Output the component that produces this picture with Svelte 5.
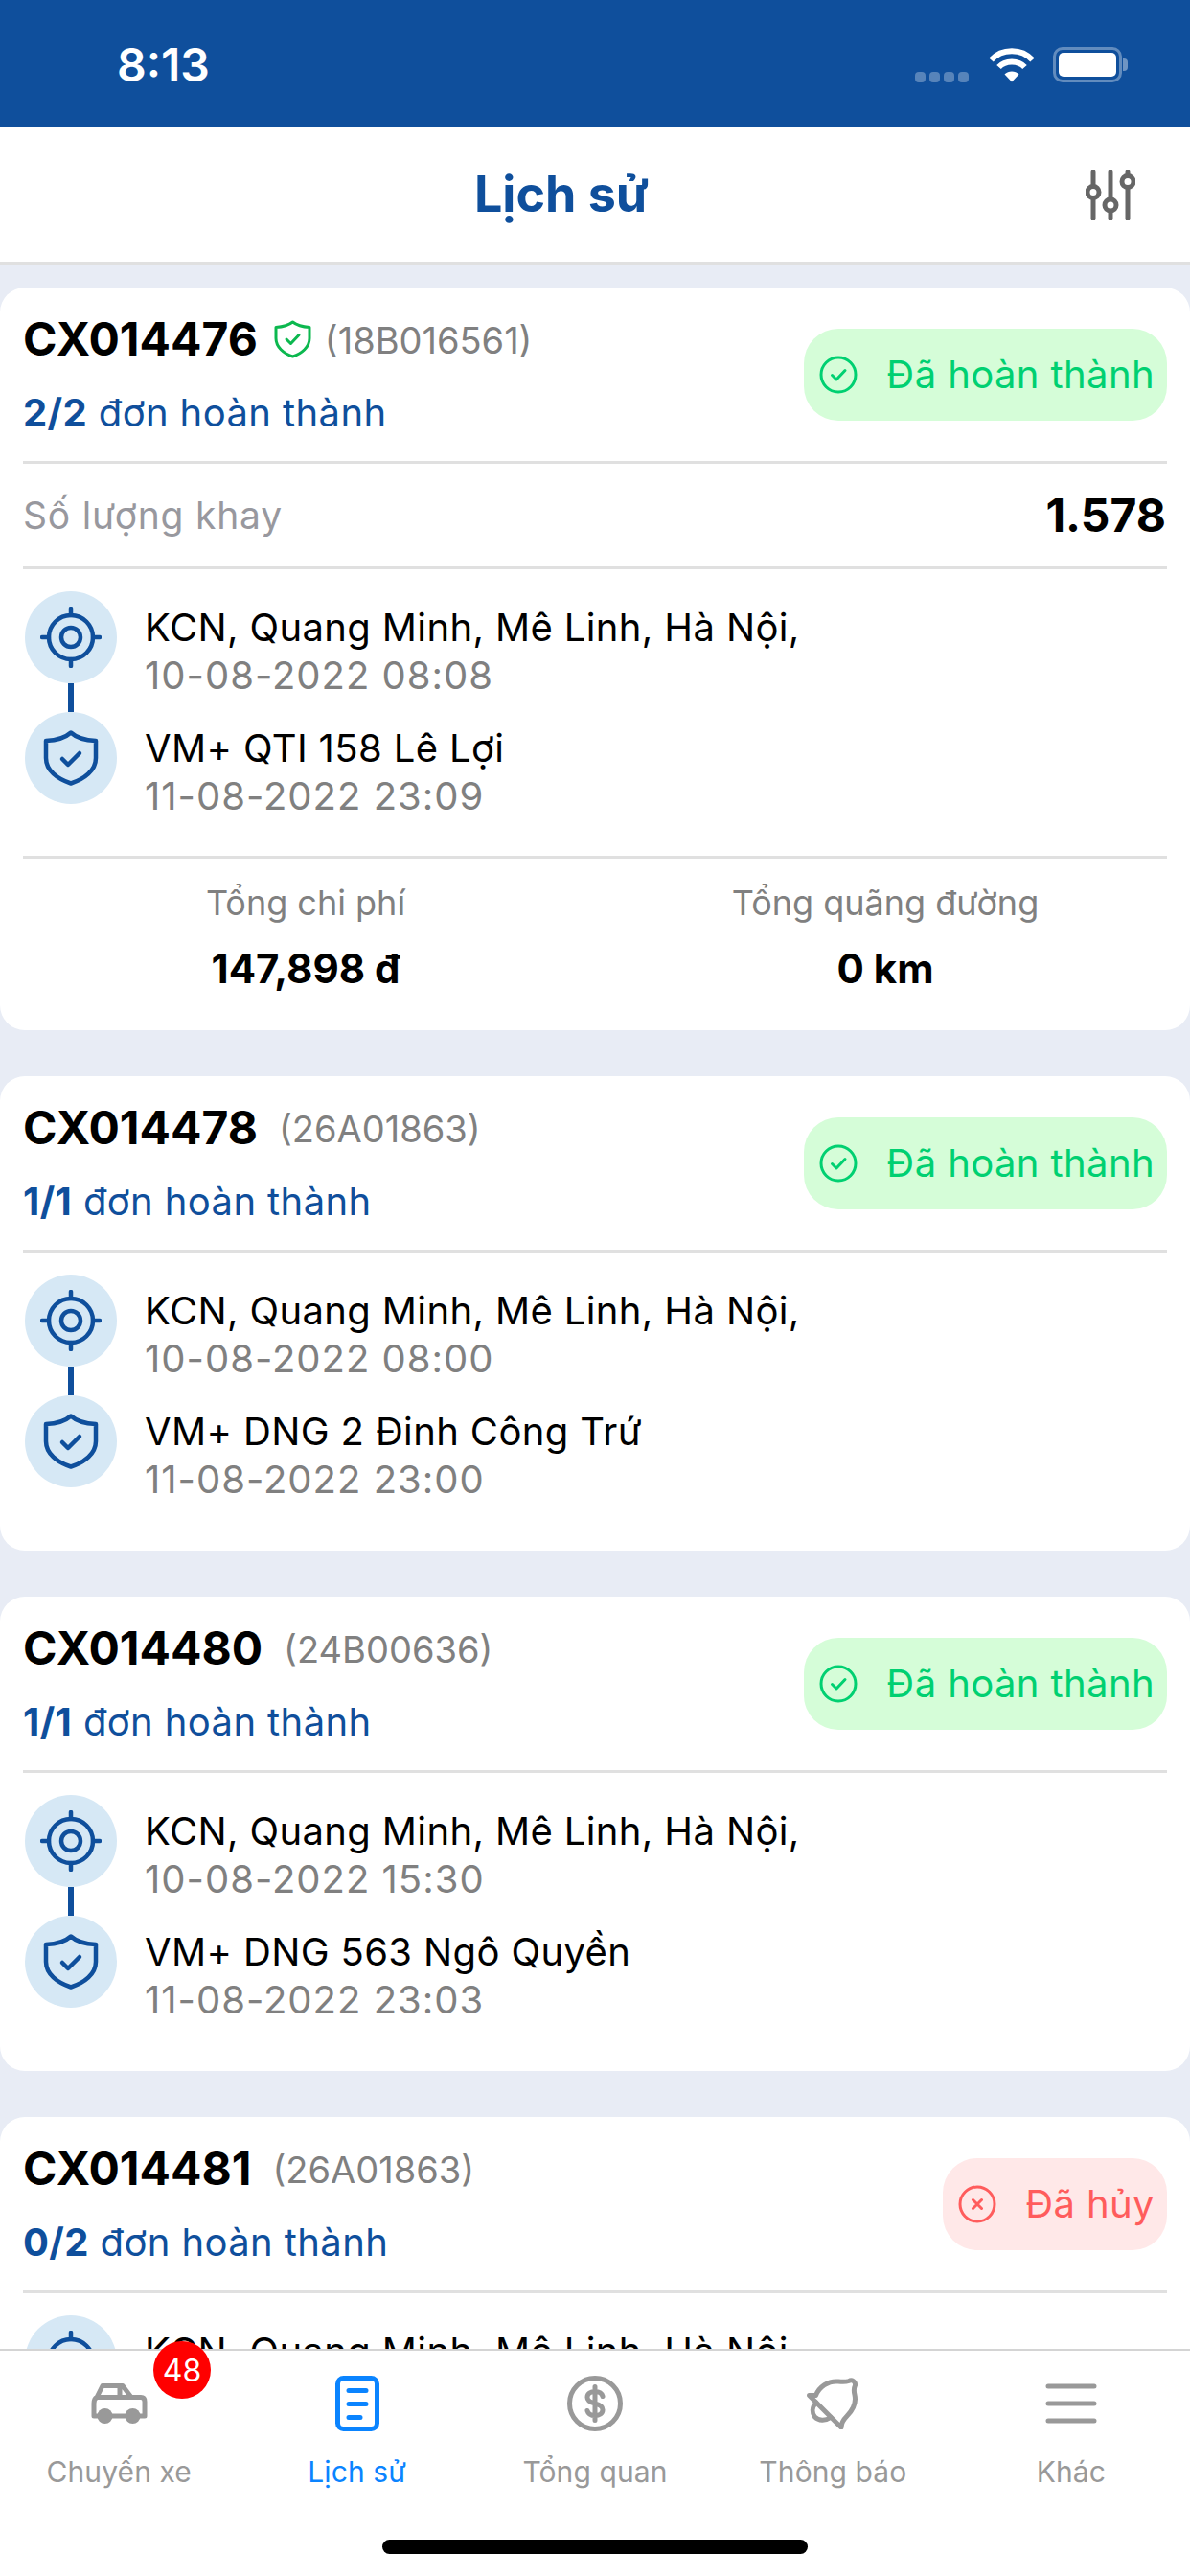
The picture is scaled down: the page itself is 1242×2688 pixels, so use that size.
<script>
  const trips = [
    { id: 'CX014476', verified: true, plate: '(18B016561)', done: '2/2', status: 'ok', qty: '1.578', from: 'KCN, Quang Minh, Mê Linh, Hà Nội,', t1: '10-08-2022 08:08', to: 'VM+ QTI 158 Lê Lợi', t2: '11-08-2022 23:09', cost: '147,898 đ', dist: '0 km' },
    { id: 'CX014478', plate: '(26A01863)', done: '1/1', status: 'ok', from: 'KCN, Quang Minh, Mê Linh, Hà Nội,', t1: '10-08-2022 08:00', to: 'VM+ DNG 2 Đinh Công Trứ', t2: '11-08-2022 23:00' },
    { id: 'CX014480', plate: '(24B00636)', done: '1/1', status: 'ok', from: 'KCN, Quang Minh, Mê Linh, Hà Nội,', t1: '10-08-2022 15:30', to: 'VM+ DNG 563 Ngô Quyền', t2: '11-08-2022 23:03' },
    { id: 'CX014481', plate: '(26A01863)', done: '0/2', status: 'no', from: 'KCN, Quang Minh, Mê Linh, Hà Nội,', t1: '10-08-2022 08:00', to: 'VM+ DNG 2 Đinh Công Trứ', t2: '11-08-2022 23:00' }
  ];
  const tabs = ['Chuyến xe', 'Lịch sử', 'Tổng quan', 'Thông báo', 'Khác'];
</script>

<div class="page">
  <div class="status">
    <span class="time">8:13</span>
    <div class="sys">
      <div class="dots"><i></i><i></i><i></i><i></i></div>
      <svg class="wifi" width="48" height="37" viewBox="0 0 48 37" fill="none" stroke="#fff" stroke-width="6">
        <path d="M2.500 13.500C13.500 1 34.500 1 45.500 13.500" />
        <path d="M10.500 21C17 13.500 31 13.500 37.500 21" />
        <path d="M24 36.500L16.500 28.500C20.500 24.500 27.500 24.500 31.500 28.500Z" fill="#fff" stroke="none" />
      </svg>
      <div class="battery"><div class="level"></div></div>
      <div class="cap"></div>
    </div>
  </div>

  <header class="head">
    <h1>Lịch sử</h1>
    <svg class="filter" width="52" height="53" viewBox="0 0 52 53" fill="none" stroke="#666" stroke-width="5" stroke-linecap="round">
      <path d="M8 2V17M8 30V51M26 2V30M26 44V51M44 2V6M44 19V51" />
      <circle cx="8" cy="23.500" r="6" /><circle cx="26" cy="37" r="6" /><circle cx="44" cy="12.500" r="6" />
    </svg>
  </header>

  <main class="list">
    {#each trips as t}
      <section class="card">
        <div class="top">
          <div class="ident">
            <div class="title">
              <b>{t.id}</b>
              {#if t.verified}
                <svg class="guard" width="39" height="40" viewBox="0 0 39 40" fill="none" stroke="#0cb84f" stroke-width="3" stroke-linecap="round" stroke-linejoin="round">
                  <path d="M19.500 2C24 5.500 30 7 37 7.500V19C37 28 29 35 19.500 38C10 35 2 28 2 19V7.500C9 7 15 5.500 19.500 2Z" />
                  <path d="M13 20L17.500 24.500L26 15.500" />
                </svg>
              {/if}
              <span class="plate" class:tight={t.verified}>{t.plate}</span>
            </div>
            <div class="done"><b>{t.done}</b> đơn hoàn thành</div>
          </div>
          <div class="pill {t.status}">
            <svg width="40" height="40" viewBox="0 0 40 40" fill="none" stroke="currentColor" stroke-width="3" stroke-linecap="round" stroke-linejoin="round">
              <circle cx="20" cy="20" r="18" />
              {#if t.status === 'ok'}
                <path d="M13.500 20.500L18 25L27 15.500" />
              {:else}
                <path d="M15.500 15.500L24.500 24.500M24.500 15.500L15.500 24.500" />
              {/if}
            </svg>
            <span>{t.status === 'ok' ? 'Đã hoàn thành' : 'Đã hủy'}</span>
          </div>
        </div>

        {#if t.qty}
          <div class="qty"><span>Số lượng khay</span><b>{t.qty}</b></div>
        {/if}

        <div class="route">
          <div class="stop">
            <div class="rail">
              <div class="disc">
                <svg width="64" height="64" viewBox="0 0 64 64" fill="none" stroke="#0f4f9c" stroke-width="4.500" stroke-linecap="round">
                  <circle cx="32" cy="32" r="23" /><circle cx="32" cy="32" r="10" />
                  <path d="M32 2V9M32 55V62M2 32H9M55 32H62" />
                </svg>
              </div>
              <div class="link"></div>
            </div>
            <div class="place"><div class="name">{t.from}</div><div class="when">{t.t1}</div></div>
          </div>
          <div class="stop">
            <div class="rail">
              <div class="disc">
                <svg width="58" height="58" viewBox="0 0 58 58" fill="none" stroke="#0f4f9c" stroke-width="4.500" stroke-linecap="round" stroke-linejoin="round">
                  <path d="M29 2.500C35 8 44 10.500 55 11V29C55 42 43 51 29 55.500C15 51 3 42 3 29V11C14 10.500 23 8 29 2.500Z" />
                  <path d="M20 30L26 36L38 24" />
                </svg>
              </div>
            </div>
            <div class="place"><div class="name">{t.to}</div><div class="when">{t.t2}</div></div>
          </div>
        </div>

        {#if t.cost}
          <div class="stats">
            <div><span>Tổng chi phí</span><b>{t.cost}</b></div>
            <div><span>Tổng quãng đường</span><b>{t.dist}</b></div>
          </div>
        {/if}
      </section>
    {/each}
  </main>

  <nav class="tabs">
    {#each tabs as label, i}
      <div class="tab" class:active={i === 1}>
        <div class="ico">
          {#if i === 0}
            <svg class="car" width="60" height="44" viewBox="0 0 60 44" fill="none" stroke="#999" stroke-width="5" stroke-linejoin="round">
              <path d="M9 35H4V22C4 18.500 5 16.500 7 15.500L13 3.500H34L43 15.500H53C56 15.500 57 17.500 57 20V35H52M37 35H23M7 15.500H43M31 3.500V15.500" />
              <circle cx="15.500" cy="35" r="8" fill="#999" stroke="none" /><circle cx="44.500" cy="35" r="8" fill="#999" stroke="none" />
            </svg>
          {:else if i === 1}
            <svg width="46" height="58" viewBox="0 0 46 58" fill="none" stroke="#0a84ff" stroke-width="5" stroke-linecap="round">
              <rect x="2.500" y="2.500" width="41" height="53" rx="6" />
              <path d="M14 15.500H32M14 29.500H32M14 43.500H26" />
            </svg>
          {:else if i === 2}
            <svg width="58" height="58" viewBox="0 0 58 58" fill="none" stroke="#999" stroke-width="5" stroke-linecap="round">
              <circle cx="29" cy="29" r="26.500" />
              <path d="M37 21.500C36 18 33 16.500 29 16.500C24.500 16.500 21 18.500 21 22.500C21 26.500 25 28 29 29C33 30 37 31.500 37 35.500C37 39.500 33.500 41.500 29 41.500C25 41.500 22 40 21 36.500M29 11.500V46.500" />
            </svg>
          {:else if i === 3}
            <svg width="54" height="54" viewBox="0 0 54 54" fill="none" stroke="#999" stroke-width="5" stroke-linecap="round" stroke-linejoin="round">
              <path d="M2.500 18.500L36 52C36 47 38 44 42 40C47 35 52 27 50 18C49 14 49.500 10 50.500 8C51 4 47 1.500 44 3.500C41 4.500 37 4.500 33 4C22 3 13 10 9.500 18.500C7 18.500 4.500 18.500 2.500 18.500Z" />
              <path d="M10 26C5 31 5.500 37 8.500 41C12.500 45 19 45.500 25 41.500" />
            </svg>
          {:else}
            <svg width="54" height="42" viewBox="0 0 54 42" fill="none" stroke="#999" stroke-width="5" stroke-linecap="round">
              <path d="M3 3H51M3 21H51M3 39H51" />
            </svg>
          {/if}
        </div>
        <span>{label}</span>
        {#if i === 0}<div class="badge">48</div>{/if}
      </div>
    {/each}
    <div class="home"></div>
  </nav>
</div>

<style>
  :global(body) { margin: 0; background: #e8ecf5; }
  .page {
    width: 1242px; height: 2688px; display: flex; flex-direction: column; overflow: hidden;
    font-family: Inter, "Noto Sans", sans-serif; color: #000; background: #e8ecf5;
  }
  .status {
    height: 132px; flex: none; background: #0f4f9c; color: #fff; position: relative;
    display: flex; justify-content: space-between; align-items: flex-start; box-sizing: border-box; padding: 0 65px 0 122px;
  }
  .time { font-size: 48px; font-weight: 600; line-height: 50px; margin-top: 43px; }
  .sys { display: flex; align-items: flex-start; margin-top: 49px; }
  .dots { display: flex; gap: 4px; margin-top: 26px; margin-right: 21px; }
  .dots i { width: 11px; height: 11px; border-radius: 4px; background: rgba(255,255,255,.3); }
  .wifi { margin-right: 19px; }
  .battery {
    width: 72px; height: 37px; box-sizing: border-box; border: 3px solid rgba(255,255,255,.35); border-radius: 10px; padding: 3px;
  }
  .level { height: 100%; background: #fff; border-radius: 5px; }
  .cap { width: 5px; height: 13px; margin: 12px 0 0 1px; background: rgba(255,255,255,.4); border-radius: 0 4px 4px 0; }

  .head {
    height: 141px; flex: none; background: #fff; border-bottom: 3px solid #e0e0e0; box-sizing: content-box;
    display: flex; align-items: center; justify-content: center; position: relative; padding-right: 70px; width: 1172px;
  }
  h1 { margin: 0; font-size: 52px; font-weight: 700; color: #0f4f9c; }
  .filter { position: absolute; left: 1133px; top: 45px; }

  .list { flex: 1; min-height: 0; overflow: hidden; padding-top: 24px; display: flex; flex-direction: column; gap: 48px; }
  .card { flex: none; background: #fff; border-radius: 26px; padding: 0 24px 49px; }
  .top { height: 181px; display: flex; justify-content: space-between; align-items: center; border-bottom: 3px solid #e0e0e0; }
  .ident { display: flex; flex-direction: column; gap: 24px; }
  .title { display: flex; align-items: center; height: 56px; }
  .title b { font-size: 48px; font-weight: 700; }
  .guard { margin-left: 17px; }
  .plate { font-size: 38px; color: #808080; margin-left: 22px; margin-top: 2px; }
  .plate.tight { margin-left: 14px; }
  .done { font-size: 40px; line-height: 50px; color: #0f4f9c; letter-spacing: .4px; }
  .done b { font-weight: 700; }

  .pill { height: 96px; border-radius: 36px; display: flex; align-items: center; gap: 30px; padding: 0 13px 0 16px; font-size: 40px; letter-spacing: .4px; }
  .pill.ok { background: #d5fdd8; color: #00d071; }
  .pill.no { background: #ffe8e8; color: #ff5c5c; }

  .qty { height: 107px; display: flex; justify-content: space-between; align-items: center; border-bottom: 3px solid #e0e0e0; padding-right: 1px; }
  .qty span { font-size: 39px; color: #98989e; letter-spacing: .8px; }
  .qty b { font-size: 48px; font-weight: 700; }

  .route { padding: 23px 0 0 2px; }
  .stop { display: flex; gap: 29px; }
  .rail { width: 96px; display: flex; flex-direction: column; align-items: center; flex: none; }
  .disc { width: 96px; height: 96px; border-radius: 50%; background: #d6e8f5; display: flex; align-items: center; justify-content: center; }
  .link { width: 6px; height: 30px; background: #0f4f9c; }
  .place { padding-top: 13px; }
  .name { font-size: 40px; line-height: 50px; letter-spacing: .37px; }
  .when { font-size: 40px; line-height: 50px; color: #808080; letter-spacing: 1px; }

  .stats { display: grid; grid-template-columns: 590px 1fr; column-gap: 16px; border-top: 3px solid #e0e0e0; margin: 37px 0 -10px; padding-top: 24px; text-align: center; }
  .stats div { display: flex; flex-direction: column; gap: 22px; }
  .stats span { font-size: 36px; line-height: 44px; color: #808080; }
  .stats b { font-size: 42px; line-height: 50px; font-weight: 700; }

  .tabs {
    height: 235px; flex: none; background: #fff; border-top: 2px solid #d4d4d4; display: grid; grid-template-columns: repeat(5, 1fr); position: relative;
  }
  .tab { display: flex; flex-direction: column; align-items: center; color: #999; font-size: 30px; position: relative; }
  .ico { height: 58px; margin-top: 26px; display: flex; align-items: center; justify-content: center; }
  .tab span { line-height: 40px; margin-top: 22px; letter-spacing: .1px; }
  .tab.active { color: #0a84ff; }
  .badge {
    position: absolute; left: 160px; top: -10px; width: 60px; height: 60px; border-radius: 50%; background: #f00; color: #fff;
    font-size: 32px; display: flex; align-items: center; justify-content: center;
  }
  .home { position: absolute; left: 399px; top: 197px; width: 444px; height: 15px; border-radius: 8px; background: #000; }
</style>
